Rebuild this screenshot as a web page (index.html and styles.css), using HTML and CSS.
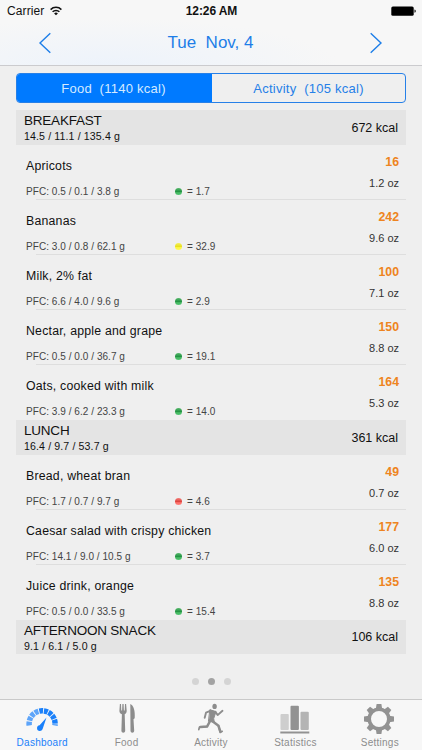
FILE: index.html
```
<!DOCTYPE html>
<html lang="en">
<head>
<meta charset="utf-8">
<title>Food diary</title>
<link rel="stylesheet" href="styles.css">
</head>
<body>
<div class="app">
  <header class="top">
    <div class="status">
      <div class="carrier">Carrier
        <svg width="12" height="10" viewBox="0 0 12 10" fill="none" stroke="#111" stroke-width="1.5"><path d="M.6 3.6a7.6 7.6 0 0 1 10.8 0M2.6 5.8a4.8 4.8 0 0 1 6.8 0"/><path d="M6 9.3 4.1 7.4a2.7 2.7 0 0 1 3.8 0z" fill="#111" stroke="none"/></svg>
      </div>
      <div class="clock">12:26 AM</div>
      <svg class="battery" width="25" height="11" viewBox="0 0 25 11"><rect x=".3" y=".4" width="22.4" height="9.4" rx="1.6"/><path d="M23.5 3.6c1.6.4 1.6 2.8 0 3.2z"/></svg>
    </div>
    <nav class="datebar">
      <svg width="14" height="22" viewBox="0 0 14 22"><path d="M12.3 1.2 2 11l10.3 9.8"/></svg>
      <h1>Tue&nbsp; Nov, 4</h1>
      <svg width="14" height="22" viewBox="0 0 14 22"><path d="M1.7 1.2 12 11 1.7 20.8"/></svg>
    </nav>
  </header>

  <main>
    <div class="segments">
      <div class="segment active">Food&nbsp; (1140 kcal)</div>
      <div class="segment">Activity&nbsp; (105 kcal)</div>
    </div>

    <section>
      <div class="meal"><div><h2>BREAKFAST</h2><p>14.5 / 11.1 / 135.4 g</p></div><span class="total">672 kcal</span></div>
      <div class="item"><h3>Apricots</h3><b>16</b><span class="pfc">PFC: 0.5 / 0.1 / 3.8 g</span><span class="load"><i class="dot green"></i>= 1.7</span><span class="oz">1.2 oz</span></div>
      <div class="item"><h3>Bananas</h3><b>242</b><span class="pfc">PFC: 3.0 / 0.8 / 62.1 g</span><span class="load"><i class="dot yellow"></i>= 32.9</span><span class="oz">9.6 oz</span></div>
      <div class="item"><h3>Milk, 2% fat</h3><b>100</b><span class="pfc">PFC: 6.6 / 4.0 / 9.6 g</span><span class="load"><i class="dot green"></i>= 2.9</span><span class="oz">7.1 oz</span></div>
      <div class="item"><h3>Nectar, apple and grape</h3><b>150</b><span class="pfc">PFC: 0.5 / 0.0 / 36.7 g</span><span class="load"><i class="dot green"></i>= 19.1</span><span class="oz">8.8 oz</span></div>
      <div class="item"><h3>Oats, cooked with milk</h3><b>164</b><span class="pfc">PFC: 3.9 / 6.2 / 23.3 g</span><span class="load"><i class="dot green"></i>= 14.0</span><span class="oz">5.3 oz</span></div>
    </section>

    <section>
      <div class="meal"><div><h2>LUNCH</h2><p>16.4 / 9.7 / 53.7 g</p></div><span class="total">361 kcal</span></div>
      <div class="item"><h3>Bread, wheat bran</h3><b>49</b><span class="pfc">PFC: 1.7 / 0.7 / 9.7 g</span><span class="load"><i class="dot red"></i>= 4.6</span><span class="oz">0.7 oz</span></div>
      <div class="item"><h3>Caesar salad with crispy chicken</h3><b>177</b><span class="pfc">PFC: 14.1 / 9.0 / 10.5 g</span><span class="load"><i class="dot green"></i>= 3.7</span><span class="oz">6.0 oz</span></div>
      <div class="item"><h3>Juice drink, orange</h3><b>135</b><span class="pfc">PFC: 0.5 / 0.0 / 33.5 g</span><span class="load"><i class="dot green"></i>= 15.4</span><span class="oz">8.8 oz</span></div>
    </section>

    <section>
      <div class="meal"><div><h2>AFTERNOON SNACK</h2><p>9.1 / 6.1 / 5.0 g</p></div><span class="total">106 kcal</span></div>
    </section>

    <div class="pager"><i></i><i class="current"></i><i></i></div>
  </main>

  <footer class="tabs">
    <div class="tab selected">
      <svg width="34" height="34" viewBox="0 0 34 34">
        <path d="M4.200 23.400A13 13 0 1 1 30 23.400" fill="none" stroke="#1a80fa" stroke-width="5.500" stroke-dasharray="3.850 .9"/>
        <path d="M4.200 23.400A13 13 0 0 1 14 9" fill="none" stroke="#f7f7f7" stroke-opacity=".3" stroke-width="6.400"/>
        <path d="M21.500 15.500 17.800 26.500a2.900 2.900 0 1 1-3.200-3.300z" fill="#1a80fa"/>
      </svg>
      <span>Dashboard</span>
    </div>
    <div class="tab">
      <svg width="34" height="34" viewBox="0 0 34 34" fill="#8c8c8c">
        <path d="M9.900 2h1.100l.3 6.400h.8L12.400 2h1.200l.3 6.400h.8L15 2h1.100l.6 6.700c0 2-.8 3-2 3.600l.5 16.500c0 2.600-3.800 2.600-3.800 0l.5-16.500C10.300 11.700 9.400 10.700 9.400 8.700z"/>
        <path d="M20.300 2c3.500 1.500 5 7 4.400 14.200l-1.200 1 .7 11.600c0 2.600-3.700 2.600-3.700 0z"/>
      </svg>
      <span>Food</span>
    </div>
    <div class="tab">
      <svg width="34" height="34" viewBox="0 0 34 34" fill="none" stroke="#8d8d8d" stroke-linejoin="round" stroke-linecap="round">
        <ellipse cx="20.6" cy="4.4" rx="2.2" ry="2.7" fill="#8d8d8d" stroke="none"/>
        <path d="M16.2 7.8 22 9.6 19.7 16.6 20.3 20.2 14.8 19.4z" fill="#8d8d8d" stroke-width="1"/>
        <path d="M16.8 8.7 12 10.7 10.7 15.8M21.4 9.7 23.6 13.1 28.5 8.8" stroke-width="1.9"/>
        <path d="M16.1 19 13.2 24.4 6.3 25M18.8 19.6 24.5 23.8 26.3 29.5" stroke-width="2.5"/>
        <path d="M13.2 24.5 5.5 25.1 4.8 27.6M24.5 23.8 26.3 30.5 28.2 29.3" stroke-width="1.7"/>
      </svg>
      <span>Activity</span>
    </div>
    <div class="tab">
      <svg width="34" height="34" viewBox="0 0 34 34">
        <rect x="2.5" y="12" width="8.3" height="16" rx="1" fill="#cecece"/>
        <rect x="12.5" y="3.7" width="8.4" height="24.3" rx="1" fill="#929292"/>
        <rect x="22.5" y="9.8" width="8.3" height="18.2" rx="1" fill="#b4b4b4"/>
        <path d="M2.3 30.5h29" stroke="#929292" stroke-width="2"/>
      </svg>
      <span>Statistics</span>
    </div>
    <div class="tab">
      <svg class="gear" width="34" height="34" viewBox="0 0 34 34">
        <circle cx="17" cy="17" r="9.8" fill="none" stroke="#929292" stroke-width="3.6"/>
        <g fill="#929292">
          <path id="tooth" d="M13.8 7 14.6 2h4.8L20.2 7z"/>
          <use href="#tooth" transform="rotate(45 17 17)"/><use href="#tooth" transform="rotate(90 17 17)"/><use href="#tooth" transform="rotate(135 17 17)"/><use href="#tooth" transform="rotate(180 17 17)"/><use href="#tooth" transform="rotate(225 17 17)"/><use href="#tooth" transform="rotate(270 17 17)"/><use href="#tooth" transform="rotate(315 17 17)"/>
        </g>
      </svg>
      <span>Settings</span>
    </div>
  </footer>
</div>
</body>
</html>
```
FILE: styles.css
```
* { box-sizing: border-box; margin: 0; padding: 0; }
body {
  font-family: "Liberation Sans", Arial, sans-serif;
  background: #efefef;
  color: #111;
}
.app { width: 422px; height: 750px; display: flex; flex-direction: column; overflow: hidden; }

.top {
  height: 66px;
  background: radial-gradient(ellipse 230px 48px at 110px 66px, #edf3fb, #f7f7f7);
  border-bottom: 1px solid #cbcbce;
}
.status { height: 22px; display: grid; grid-template-columns: 1fr auto 1fr; align-items: center; padding: 0 6px 0 7px; }
.carrier { display: flex; align-items: center; gap: 6px; font-size: 12px; letter-spacing: .1px; }
.clock { font-size: 12px; font-weight: bold; letter-spacing: -.1px; }
.battery { justify-self: end; }
.datebar { height: 42px; display: flex; align-items: center; justify-content: space-between; padding: 0 39px 0 38px; }
.datebar svg { fill: none; stroke: #1d7ee8; stroke-width: 1.4; }
.datebar h1 { font-size: 17px; font-weight: normal; color: #1d7ee8; }

main { flex: 1; padding: 7px 16px 0; }
.segments { height: 30px; margin-bottom: 7px; display: flex; border: 1px solid #2680e8; border-radius: 4px; overflow: hidden; }
.segment { flex: 1; display: flex; align-items: center; justify-content: center; padding-right: 2px; font-size: 13px; letter-spacing: .25px; color: #2680e8; }
.segment:last-child { padding-right: 0; }
.segment.active { background: #007aff; color: #d5eaff; }

.meal { height: 34.8px; display: flex; justify-content: space-between; align-items: center; padding: 0 8px; background: #e4e4e4; }
.meal h2 { padding-top: 2px; font-size: 13.5px; font-weight: normal; line-height: 17px; letter-spacing: -.22px; }
.meal p { font-size: 10.6px; line-height: 15px; letter-spacing: .12px; }
.total { font-size: 12.5px; padding-top: 1px; }

.item {
  height: 55px;
  display: grid;
  grid-template-columns: 149px 1fr auto;
  grid-template-rows: 35px 19px;
  padding: 0 7px 0 10px;
  background: linear-gradient(#dedede, #dedede) 20px 100% / 100% 1px no-repeat;
}
.item:last-child { background: none; }
.item h3 { grid-column: 1 / 3; font-size: 12.3px; font-weight: normal; line-height: 43px; letter-spacing: .22px; white-space: nowrap; }
.item b { font-size: 12.3px; line-height: 35px; color: #ee8420; text-align: right; }
.pfc, .load { font-size: 10px; line-height: 23px; color: #444; letter-spacing: .05px; white-space: nowrap; }
.load { display: flex; align-items: center; height: 23px; gap: 5px; }
.oz { font-size: 11px; line-height: 7px; color: #333; text-align: right; }
.dot { width: 7px; height: 7px; border-radius: 50%; }
.green { background: linear-gradient(#58b96d, #249344 50%, #3fb45c 60%, #55c673); }
.yellow { background: linear-gradient(#f4f05c, #e8df20 50%, #fbf53e 60%, #fff95a); }
.red { background: linear-gradient(#f47e79, #dc4540 50%, #f9655f 60%, #ff8580); }

.pager { display: flex; justify-content: center; gap: 9px; margin-top: 24px; }
.pager i { width: 7px; height: 7px; border-radius: 50%; background: #d4d4d4; }
.pager .current { background: #a3a3a3; }

.tabs { height: 51px; display: flex; background: #f7f7f7; border-top: 1px solid #c9c9c9; }
.tab { flex: 1; display: flex; flex-direction: column; align-items: center; padding-top: 2px; color: #8d8d8d; font-size: 10px; letter-spacing: .25px; }
.tab span { line-height: 14px; }
.gear { margin-right: 2px; }
.tab.selected { color: #1a80fa; }
```
